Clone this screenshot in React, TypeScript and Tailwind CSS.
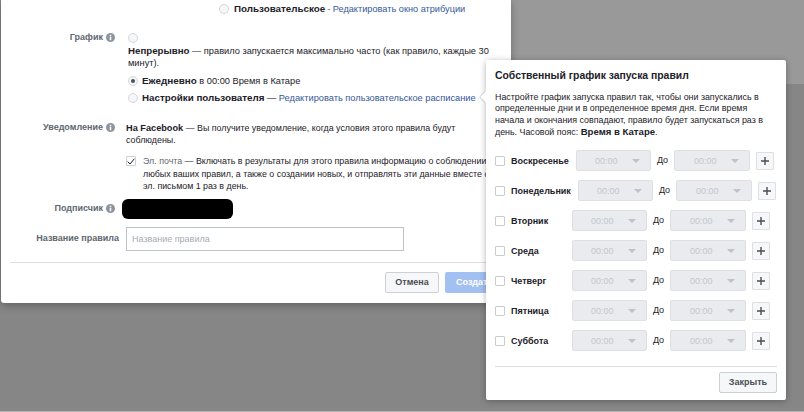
const font = { fontFamily: '"Liberation Sans", Arial, sans-serif' };

function Info() {
  return (
    <svg width="9" height="9" viewBox="0 0 12 12" className="shrink-0">
      <circle cx="6" cy="6" r="6" fill="#8d949e" />
      <rect x="5" y="5" width="2" height="4.6" fill="#fff" />
      <rect x="5" y="2.4" width="2" height="1.8" fill="#fff" />
    </svg>
  );
}

function Radio({ checked = false }: { checked?: boolean }) {
  return (
    <span className="w-[10px] h-[10px] rounded-full border border-[#d5d7da] bg-[#f5f6f7] shrink-0 flex items-center justify-center">
      {checked && <span className="w-[4px] h-[4px] rounded-full bg-[#4b4f56]" />}
    </span>
  );
}

function TimeSelect({ w, pl }: { w: string; pl: string }) {
  return (
    <div className={`${w} ${pl} h-[21px] bg-[#e9ebee] border border-[#dddfe2] rounded-[2px] flex items-center justify-between pr-[10px] text-[9px] text-[#c4c7cc] shrink-0`}>
      <span>00:00</span>
      <span className="w-0 h-0 border-x-[4px] border-x-transparent border-t-[4px] border-t-[#bec2c9]" />
    </div>
  );
}

function Day({ name, shift = 0 }: { name: string; shift?: 0 | 1 | 2 }) {
  const label = shift === 2 ? "w-[67px]" : shift === 1 ? "w-[65px]" : "w-[61px]";
  return (
    <div className="flex items-center h-[30px] pl-[9px]">
      <span className="w-[10px] h-[10px] border border-[#c9ccd1] bg-white rounded-[1px] shrink-0" />
      <span className={`${label} ml-[6px] text-[9px] font-bold text-[#1d2129] shrink-0 whitespace-nowrap`}>{name}</span>
      <TimeSelect w="w-[75px]" pl="pl-[18px]" />
      <span className="w-[23px] text-center text-[9px] text-[#1d2129] -mt-[2px] shrink-0">До</span>
      <TimeSelect w="w-[76px]" pl="pl-[19px]" />
      <div className="ml-[6px] w-[18px] h-[18px] border border-[#dddfe2] bg-[#f6f7f9] flex items-center justify-center shrink-0 rounded-[1px]">
        <svg width="8" height="8" viewBox="0 0 8 8"><path d="M4 0v8M0 4h8" stroke="#4b4f56" strokeWidth="1.4" /></svg>
      </div>
    </div>
  );
}

function Row({ label, top, children }: { label: string; top: string; children: React.ReactNode }) {
  return (
    <div className="flex">
      <div className={`w-[116px] shrink-0 flex items-center justify-end gap-[3px] text-[9px] font-bold text-[#606770] ${top}`}>
        <span className="whitespace-nowrap">{label}</span>
        <Info />
      </div>
      {children}
    </div>
  );
}

export default function App() {
  return (
    <div style={font} className="relative w-[804px] h-[412px] overflow-hidden bg-[#868686] text-[9px] leading-[12px]">
      <div className="absolute left-[511px] right-0 top-0 h-[84px] bg-[#999999]" />
      <div className="absolute left-0 right-0 bottom-0 h-px bg-[#b5b5b5]" />

      <div className="absolute left-px top-0 w-[510px] h-[303px] bg-white rounded-b-[3px] shadow-[0_2px_8px_rgba(0,0,0,0.3)]">
        <div className="flex items-center gap-[5px] pl-[218px] pt-[2px] h-[16px] whitespace-nowrap">
          <Radio />
          <span className="font-bold text-[#1d2129] text-[9.8px]">Пользовательское</span>
          <span className="text-[#365899] text-[9.2px] -ml-[3px]"><span className="text-[#606770]">- </span>Редактировать окно атрибуции</span>
        </div>

        <div className="mt-[14px]">
          <Row label="График" top="h-[14px] pr-[2px]">
            <div className="pl-[11px] w-[376px]">
              <div className="h-[15px] flex items-center"><Radio /></div>
              <p className="text-[#1d2129] text-[9.25px] leading-[12px]">
                <b className="text-[9.7px]">Непрерывно</b> — правило запускается максимально часто (как правило, каждые 30 минут).
              </p>
              <div className="flex items-center gap-[4px] mt-[6px] h-[12px] text-[#1d2129] text-[9.25px]">
                <Radio checked />
                <span><b className="text-[9.9px]">Ежедневно</b> в 00:00 Время в Катаре</span>
              </div>
              <div className="flex items-center gap-[4px] mt-[5px] h-[12px] whitespace-nowrap text-[9.25px]">
                <Radio />
                <span><b className="text-[#1d2129] text-[9.8px]">Настройки пользователя</b> — <span className="text-[#365899]">Редактировать пользовательское расписание</span></span>
              </div>
            </div>
          </Row>
        </div>

        <div className="mt-[18px]">
          <Row label="Уведомление" top="h-[10px] pr-[2px]">
            <div className="pl-[9px] w-[380px] text-[#1d2129]">
              <p className="w-[345px] text-[8.9px]"><b className="text-[9.2px]">На Facebook</b> — Вы получите уведомление, когда условия этого правила будут соблюдены.</p>
              <div className="flex gap-[7px] mt-[9px]">
                <span className="w-[10px] h-[10px] mt-px border border-[#ccd0d5] rounded-[1px] flex items-center justify-center shrink-0">
                  <svg width="8" height="7" viewBox="0 0 8 7"><path d="M0.7 3.6 L3 6 L7.3 0.8" fill="none" stroke="#1d2129" strokeWidth="1" /></svg>
                </span>
                <p className="w-[352px] leading-[12.5px] text-[8.85px]"><span className="text-[#606770]">Эл. почта</span> — Включать в результаты для этого правила информацию о соблюдении любых ваших правил, а также о создании новых, и отправлять эти данные вместе с эл. письмом 1 раз в день.</p>
              </div>
            </div>
          </Row>
        </div>

        <div className="flex items-center mt-[6px] h-[21px]">
          <div className="w-[116px] flex items-center justify-end gap-[3px] pr-[2px] -mt-[2px] font-bold text-[#606770]">
            <span>Подписчик</span><Info />
          </div>
          <div className="ml-[5px] w-[111px] h-[20px] bg-black rounded-[6px]" />
        </div>

        <div className="flex items-center mt-[7px]">
          <div className="w-[118px] text-right font-bold text-[#606770] -mt-[1px]">Название правила</div>
          <div className="ml-[7px] w-[278px] h-[24px] border border-[#bec2c9] pl-[5px] flex items-center text-[#a8acb3]">Название правила</div>
        </div>

        <div className="mt-[11px] ml-[9px] mr-[10px] border-t border-[#dddfe2]" />

        <div className="flex justify-end gap-[6px] pt-[9px] pr-[1px]">
          <div className="w-[54px] h-[21px] flex items-center justify-center bg-[#f6f7f9] border border-[#ced0d4] text-[#4b4f56] font-bold rounded-[2px]">Отмена</div>
          <div className="w-[65px] h-[21px] flex items-center pl-[11px] bg-[#a3c0f2] text-white font-bold rounded-[2px] overflow-hidden">Создать</div>
        </div>
      </div>

      <div className="absolute left-[486px] top-[60px] w-[300px] h-[340px] bg-white rounded-[2px] shadow-[0_1px_6px_rgba(0,0,0,0.3)]">
        <span className="absolute -left-[4px] top-[33px] w-[8px] h-[8px] bg-white rotate-45 shadow-[-1px_1px_1px_rgba(0,0,0,0.15)]" />
        <div className="relative pl-[9px] pr-[13px] pt-[10px]">
          <h2 className="text-[10.4px] leading-[12px] font-bold text-[#1d2129] whitespace-nowrap">Собственный график запуска правил</h2>
          <p className="mt-[10px] text-[8.87px] leading-[11.4px] text-[#1d2129] w-[282px]">
            Настройте график запуска правил так, чтобы они запускались в определенные дни и в определенное время дня. Если время начала и окончания совпадают, правило будет запускаться раз в день. Часовой пояс: <b className="text-[9.6px]">Время в Катаре</b>.
          </p>
        </div>
        <div className="mt-[7px]">
          <Day name="Воскресенье" shift={1} />
          <Day name="Понедельник" shift={2} />
          <Day name="Вторник" />
          <Day name="Среда" />
          <Day name="Четверг" />
          <Day name="Пятница" />
          <Day name="Суббота" />
        </div>
        <div className="mt-[10px] mx-[9px] border-t border-[#dddfe2]" />
        <div className="flex justify-end pr-[9px] pt-[5px]">
          <div className="w-[58px] h-[21px] flex items-center justify-center bg-[#f6f7f9] border border-[#ced0d4] text-[#4b4f56] font-bold rounded-[2px]">Закрыть</div>
        </div>
      </div>
    </div>
  );
}
